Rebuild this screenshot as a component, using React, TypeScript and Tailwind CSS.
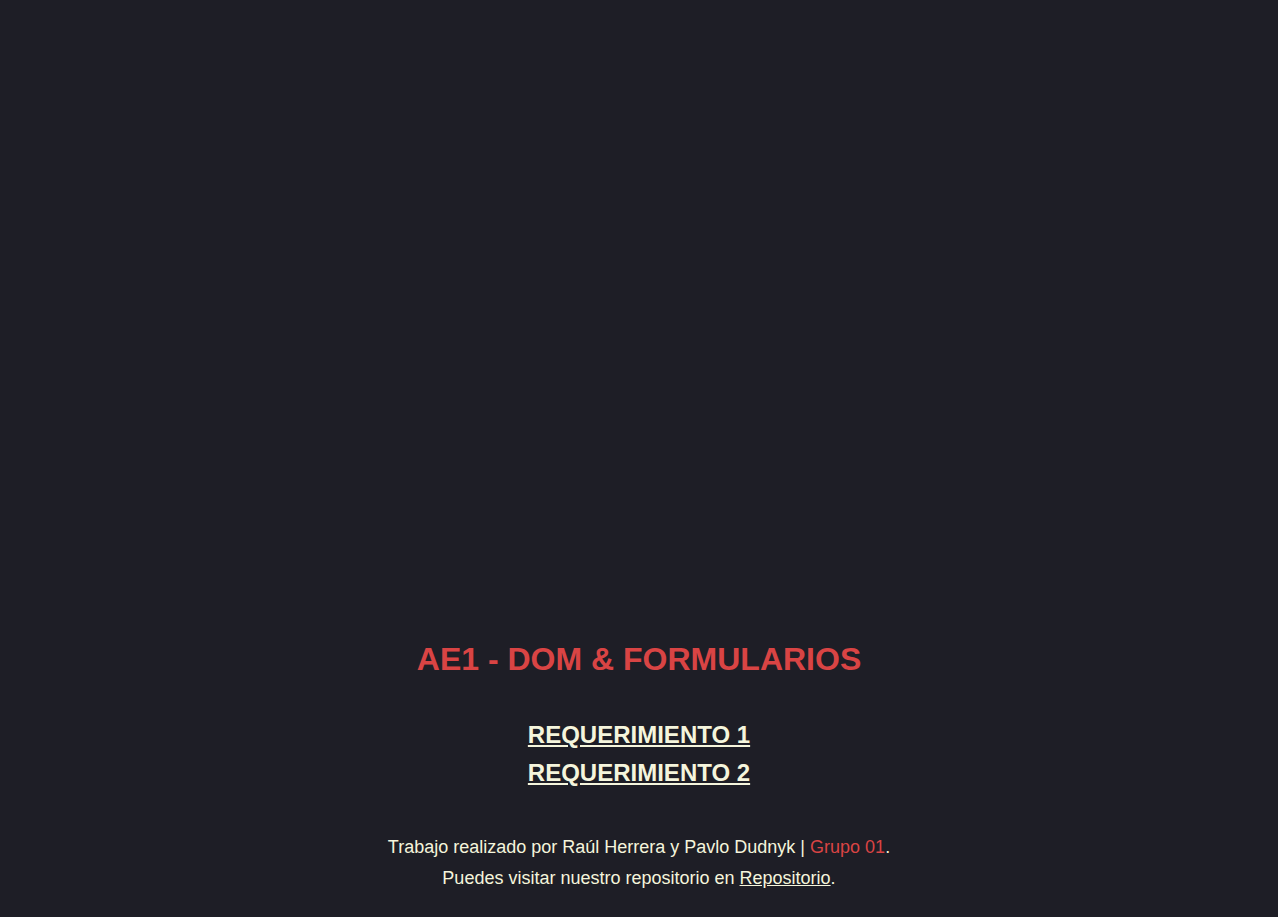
const App = () => {
  return (
    <div
      className="min-h-screen bg-[#1e1e26] flex flex-col justify-end items-center text-center pb-[23px]"
      style={{ fontFamily: '"Liberation Sans", Arial, sans-serif' }}
    >
      <h1 className="text-[32px] font-bold text-[#d94444] leading-[37px]">
        AE1 - DOM &amp; FORMULARIOS
      </h1>

      <nav className="flex flex-col items-center mt-[38px]">
        <a href="#" className="text-[24px] font-bold text-[#f5f5dc] underline leading-[38px]">
          REQUERIMIENTO 1
        </a>
        <a href="#" className="text-[24px] font-bold text-[#f5f5dc] underline leading-[38px]">
          REQUERIMIENTO 2
        </a>
      </nav>

      <footer className="mt-[40px] text-[18px] text-[#f5f5dc] leading-[31px]">
        <p>
          Trabajo realizado por Raúl Herrera y Pavlo Dudnyk |{" "}
          <span className="text-[#d94444]">Grupo 01</span>.
        </p>
        <p>
          Puedes visitar nuestro repositorio en{" "}
          <a href="#" className="underline">
            Repositorio
          </a>
          .
        </p>
      </footer>
    </div>
  );
};

export default App;
